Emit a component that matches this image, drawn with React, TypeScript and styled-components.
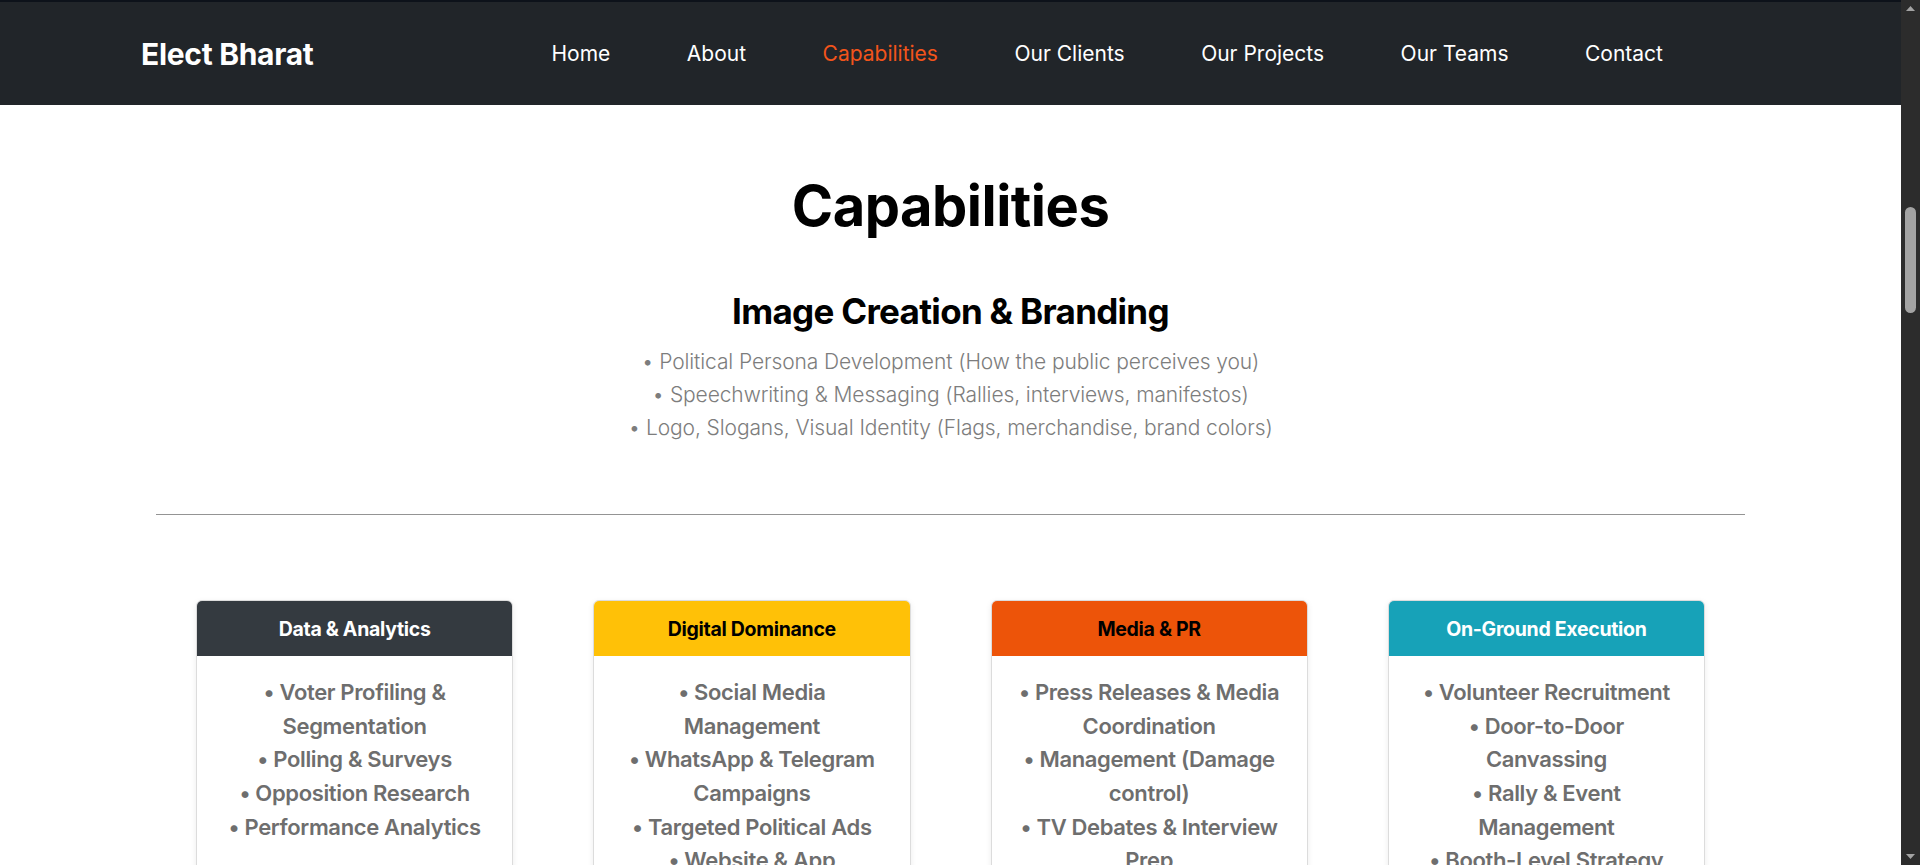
import React from "react";
import styled, { createGlobalStyle } from "styled-components";

const GlobalStyle = createGlobalStyle`
  html, body { margin: 0; padding: 0; height: 100%; overflow: hidden; }
  body { font-family: Inter, "Noto Sans", Arial, sans-serif; background: #fff; }
  #root { height: 100%; }
  * { box-sizing: border-box; }
`;

const Shell = styled.div`
  display: flex;
  height: 100vh;
  background: #ffffff;
`;

const Main = styled.main`
  flex: 1;
  min-width: 0;
  height: 100%;
  overflow: hidden;
`;

const Rail = styled.div`
  width: 19px;
  flex: none;
  height: 100%;
  background: #2c2c2c;
  display: flex;
  flex-direction: column;
  align-items: center;
`;

const RailButton = styled.div`
  height: 17px;
  width: 100%;
  display: flex;
  align-items: center;
  justify-content: center;
`;

const RailTrack = styled.div`
  flex: 1;
  width: 100%;
  display: flex;
  flex-direction: column;
  align-items: center;
`;

const RailThumb = styled.div`
  margin-top: 190px;
  width: 11px;
  height: 106px;
  border-radius: 6px;
  background: #a3a3a3;
`;

const NavBar = styled.header`
  height: 105px;
  background: #212529;
  border-top: 2px solid #0d121a;
  display: flex;
  align-items: center;
  justify-content: space-between;
  padding: 0 238px 0 141px;
`;

const Brand = styled.a`
  color: #fff;
  font-size: 30px;
  font-weight: 700;
  letter-spacing: -0.3px;
  text-decoration: none;
`;

const NavList = styled.nav`
  display: flex;
  align-items: center;
  gap: 76.5px;
`;

const NavLink = styled.a<{ $active?: boolean }>`
  color: ${(p) => (p.$active ? "#f2541b" : "#ffffff")};
  font-size: 21px;
  font-weight: 400;
  letter-spacing: 0;
  text-decoration: none;
`;

const Section = styled.section`
  padding: 68px 0 80px;
  text-align: center;
`;

const Container = styled.div`
  max-width: 1589px;
  margin: 0 auto;
`;

const Title = styled.h1`
  margin: 0 0 50px;
  font-size: 56px;
  line-height: 1.2;
  font-weight: 700;
  letter-spacing: -0.5px;
  color: #000;
`;

const SubTitle = styled.h2`
  margin: 0 0 13px;
  font-size: 35px;
  line-height: 1.2;
  font-weight: 700;
  letter-spacing: -0.7px;
  color: #000;
`;

const LightList = styled.ul`
  list-style: none;
  margin: 0;
  padding: 0;
`;

const LightItem = styled.li`
  font-size: 21px;
  line-height: 33px;
  font-weight: 300;
  color: #7d7d7d;
  letter-spacing: -0.1px;
`;

const Divider = styled.hr`
  margin: 70px 0 85px;
  border: 0;
  border-top: 1px solid #949494;
`;

const CardGrid = styled.div`
  display: grid;
  grid-template-columns: repeat(4, 1fr);
  column-gap: 80px;
  padding: 0 40px;
  align-items: stretch;
`;

const Card = styled.div`
  border: 1px solid #dcdcdc;
  border-radius: 6px;
  overflow: hidden;
  background: #fff;
  box-shadow: 0 2px 6px rgba(0, 0, 0, 0.08);
  display: flex;
  flex-direction: column;
`;

const CardHeader = styled.div<{ $bg: string; $fg: string }>`
  height: 55px;
  display: flex;
  align-items: center;
  justify-content: center;
  background: ${(p) => p.$bg};
  color: ${(p) => p.$fg};
  font-size: 19.5px;
  font-weight: 700;
  letter-spacing: -0.3px;
`;

const CardBody = styled.ul`
  list-style: none;
  margin: 0;
  padding: 20px 24px 24px;
  flex: 1;
`;

const CardItem = styled.li`
  font-size: 22px;
  line-height: 33.6px;
  font-weight: 600;
  color: #6e6e6e;
  letter-spacing: -0.35px;
`;

const navItems = ["Home", "About", "Capabilities", "Our Clients", "Our Projects", "Our Teams", "Contact"];

const branding = [
  "Political Persona Development (How the public perceives you)",
  "Speechwriting & Messaging (Rallies, interviews, manifestos)",
  "Logo, Slogans, Visual Identity (Flags, merchandise, brand colors)",
];

const cards = [
  {
    title: "Data & Analytics",
    bg: "#343a40",
    fg: "#ffffff",
    items: ["Voter Profiling & Segmentation", "Polling & Surveys", "Opposition Research", "Performance Analytics"],
  },
  {
    title: "Digital Dominance",
    bg: "#ffc107",
    fg: "#000000",
    items: ["Social Media Management", "WhatsApp & Telegram Campaigns", "Targeted Political Ads", "Website & App Development"],
  },
  {
    title: "Media & PR",
    bg: "#ed5409",
    fg: "#000000",
    items: ["Press Releases & Media Coordination", "Management (Damage control)", "TV Debates & Interview Prep"],
  },
  {
    title: "On-Ground Execution",
    bg: "#17a2b8",
    fg: "#ffffff",
    items: ["Volunteer Recruitment", "Door-to-Door Canvassing", "Rally & Event Management", "Booth-Level Strategy"],
  },
];

const Arrow = ({ down }: { down?: boolean }) => (
  <svg width="9" height="5" viewBox="0 0 9 5">
    <path d={down ? "M0 0 L9 0 L4.5 5 Z" : "M0 5 L9 5 L4.5 0 Z"} fill="#a3a3a3" />
  </svg>
);

export default function App() {
  return (
    <>
      <GlobalStyle />
      <Shell>
        <Main>
          <NavBar>
            <Brand href="#home">Elect Bharat</Brand>
            <NavList>
              {navItems.map((n) => (
                <NavLink key={n} href={`#${n}`} $active={n === "Capabilities"}>
                  {n}
                </NavLink>
              ))}
            </NavList>
          </NavBar>
          <Section id="capabilities">
            <Container>
              <Title>Capabilities</Title>
              <SubTitle>Image Creation &amp; Branding</SubTitle>
              <LightList>
                {branding.map((b) => (
                  <LightItem key={b}>• {b}</LightItem>
                ))}
              </LightList>
              <Divider />
              <CardGrid>
                {cards.map((c) => (
                  <Card key={c.title}>
                    <CardHeader $bg={c.bg} $fg={c.fg}>
                      {c.title}
                    </CardHeader>
                    <CardBody>
                      {c.items.map((it) => (
                        <CardItem key={it}>• {it}</CardItem>
                      ))}
                    </CardBody>
                  </Card>
                ))}
              </CardGrid>
            </Container>
          </Section>
        </Main>
        <Rail>
          <RailButton>
            <Arrow />
          </RailButton>
          <RailTrack>
            <RailThumb />
          </RailTrack>
          <RailButton>
            <Arrow down />
          </RailButton>
        </Rail>
      </Shell>
    </>
  );
}
